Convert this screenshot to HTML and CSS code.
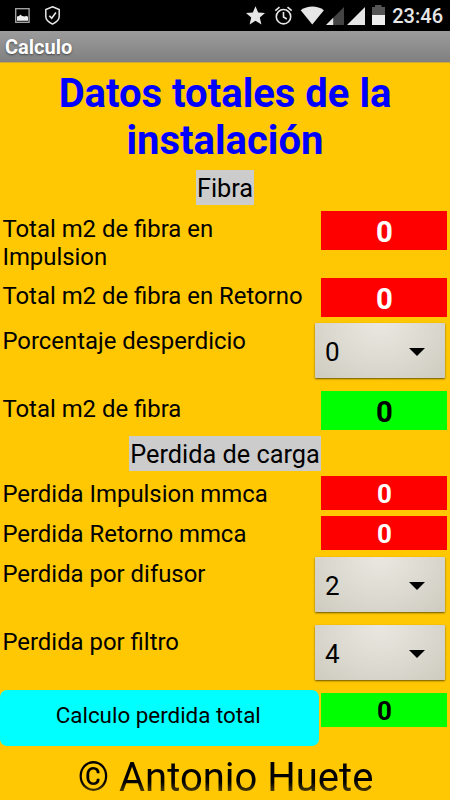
FILE: index.html
```html
<!DOCTYPE html>
<html lang="es">
<head>
    <meta charset="UTF-8">
    <meta name="viewport" content="width=device-width, initial-scale=1.0">
    <title>Calculo</title>
    <link rel="stylesheet" href="styles.css">
</head>
<body>
    <!-- Barra de estado -->
    <div class="status-bar">
        <svg class="status-icons" width="450" height="31" viewBox="0 0 450 31">
            <rect x="15.7" y="8.7" width="13.4" height="13.6" fill="none" stroke="#aaa" stroke-width="1.3"/>
            <path d="M17 20.7v-4.2l2-.5 1.500-1.500 1.500 1.500 3 .5 1-.8 2 1v4z" fill="#eee"/>
            <path d="M52.5 6.8l6.700 2.800v7c0 3.500-3 5.800-6.700 7.600c-3.700-1.800-6.700-4.100-6.700-7.600V9.600z" fill="none" stroke="#e6e6e6" stroke-width="1.5"/>
            <path d="M49.3 15.7l2.400 2.500 4.200-5.700" fill="none" stroke="#e6e6e6" stroke-width="1.6"/>
            <path d="M255.500 6.200l2.700 6.300 6.800.6-5.200 4.500 1.600 6.800-5.900-3.600-5.900 3.600 1.600-6.800-5.200-4.500 6.800-.6z" fill="#e6e6e6"/>
            <g fill="none" stroke="#e6e6e6" stroke-width="1.6">
                <circle cx="283.5" cy="16.7" r="7.2"/>
                <path d="M275.300 10.700l4.200-3.500M291.700 10.700l-4.200-3.500M283.500 12v5l3.300 2"/>
            </g>
            <path d="M312.300 24.600L300.700 10.200c6.600-4.900 16.600-4.900 23.200 0z" fill="#e6e6e6"/>
            <path d="M344 7v18H326z" fill="#444"/>
            <path d="M333.200 17.800V25H326z" fill="#e6e6e6"/>
            <path d="M365 7v18h-18z" fill="#e6e6e6"/>
            <path d="M372 7h3V5h6.500v2h3.500v8h-13z" fill="#555"/>
            <path d="M372 15h13v10h-13z" fill="#eee"/>
        </svg>
        <span class="clock">23:46</span>
    </div>
    <div class="title-bar">Calculo</div>

    <div class="content">
        <h1>Datos totales de la instalación</h1>

        <!-- Fibra -->
        <div class="section"><span>Fibra</span></div>
        <div class="row tall">
            <div class="label">Total m2 de fibra en Impulsion</div>
            <div class="value">0</div>
        </div>
        <div class="row">
            <div class="label">Total m2 de fibra en Retorno</div>
            <div class="value">0</div>
        </div>
        <div class="row with-select">
            <div class="label">Porcentaje desperdicio</div>
            <button type="button" class="select">0</button>
        </div>
        <div class="row">
            <div class="label">Total m2 de fibra</div>
            <div class="value total">0</div>
        </div>

        <!-- Perdida de carga -->
        <div class="section load"><span>Perdida de carga</span></div>
        <div class="row short">
            <div class="label">Perdida Impulsion mmca</div>
            <div class="value small">0</div>
        </div>
        <div class="row short">
            <div class="label">Perdida Retorno mmca</div>
            <div class="value small">0</div>
        </div>
        <div class="row with-select loss">
            <div class="label">Perdida por difusor</div>
            <button type="button" class="select">2</button>
        </div>
        <div class="row with-select loss">
            <div class="label">Perdida por filtro</div>
            <button type="button" class="select">4</button>
        </div>
        <div class="row result">
            <button type="button" class="button">Calculo perdida total</button>
            <div class="value small total">0</div>
        </div>

        <div class="footer">© Antonio Huete</div>
    </div>
</body>
</html>
```

FILE: styles.css
```css
* {
    box-sizing: border-box;
}
body {
    margin: 0;
    height: 800px;
    overflow: hidden;
    font-family: Roboto, sans-serif;
    color: #000;
    background-color: #ffc803;
}
.status-bar {
    display: grid;
    height: 31px;
    background-color: #000;
}
.status-icons, .clock {
    grid-area: 1 / 1;
}
.clock {
    justify-self: end;
    padding-right: 7px;
    font-size: 20px;
    font-weight: 500;
    line-height: 32px;
    color: #e6e6e6;
}
.title-bar {
    height: 32px;
    padding-left: 5px;
    border-bottom: 1px solid #cfa53c;
    font-size: 20px;
    font-weight: bold;
    line-height: 33px;
    color: #fff;
    text-shadow: 0 1px 2px rgba(0, 0, 0, 0.5);
    background: linear-gradient(#9c9c9c, #808080);
}
.content {
    padding-top: 7px;
}
h1 {
    height: 97px;
    margin: 0;
    padding: 0 30px;
    font-size: 40px;
    line-height: 47px;
    text-align: center;
    color: #00f;
}
.section {
    display: flex;
    justify-content: center;
    height: 41px;
    padding: 3px 0;
}
.section.load {
    height: 40px;
}
.section span {
    height: 35px;
    padding: 0 1px;
    font-size: 25.3px;
    line-height: 38px;
    background-color: #ccc;
}
.row {
    display: flex;
    justify-content: space-between;
    align-items: flex-start;
    height: 45px;
    padding: 3px 2.6px 0 2.4px;
}
.row.tall {
    height: 67px;
}
.row.short {
    height: 40px;
}
.row.with-select {
    height: 68px;
    padding-right: 5px;
}
.label {
    max-width: 310px;
    padding-top: 4px;
    font-size: 23.9px;
    line-height: 28px;
}
.tall .label {
    max-width: 240px;
}
.value {
    width: 126px;
    height: 39px;
    font-size: 29.3px;
    font-weight: bold;
    line-height: 42px;
    text-align: center;
    color: #fff;
    background-color: #f00;
}
.value.small {
    height: 34px;
    font-size: 26px;
    line-height: 37px;
}
.value.total {
    color: #000;
    background-color: #0f0;
}
.select {
    display: flex;
    justify-content: space-between;
    align-items: center;
    width: 130px;
    height: 55px;
    padding: 2px 20px 0 10px;
    border: none;
    border-radius: 1px;
    font-family: inherit;
    font-size: 26px;
    color: #000;
    background: radial-gradient(ellipse at 50% 0, #e9e7df, #dad8ce 60%, #cdcabf);
    box-shadow: 0 1px 2px rgba(70, 55, 0, 0.8);
}
.loss .select {
    margin-top: 1px;
}
.select::after {
    content: "";
    border: 8px solid transparent;
    border-top-color: #000;
    border-bottom: none;
}
.row.result {
    height: 64px;
    padding: 1px 2.6px 0 0;
}
.result .value {
    margin-top: 3px;
}
.button {
    width: 318.5px;
    height: 56px;
    padding: 0 2px 6px 0;
    border: none;
    border-radius: 7px;
    font-family: inherit;
    font-size: 22.4px;
    color: #000;
    background-color: #0ff;
}
.footer {
    height: 48px;
    padding-left: 1px;
    font-size: 40px;
    line-height: 50px;
    text-align: center;
    background: linear-gradient(#000 60%, #604b00 85%);
    -webkit-background-clip: text;
    background-clip: text;
    color: transparent;
}
```
